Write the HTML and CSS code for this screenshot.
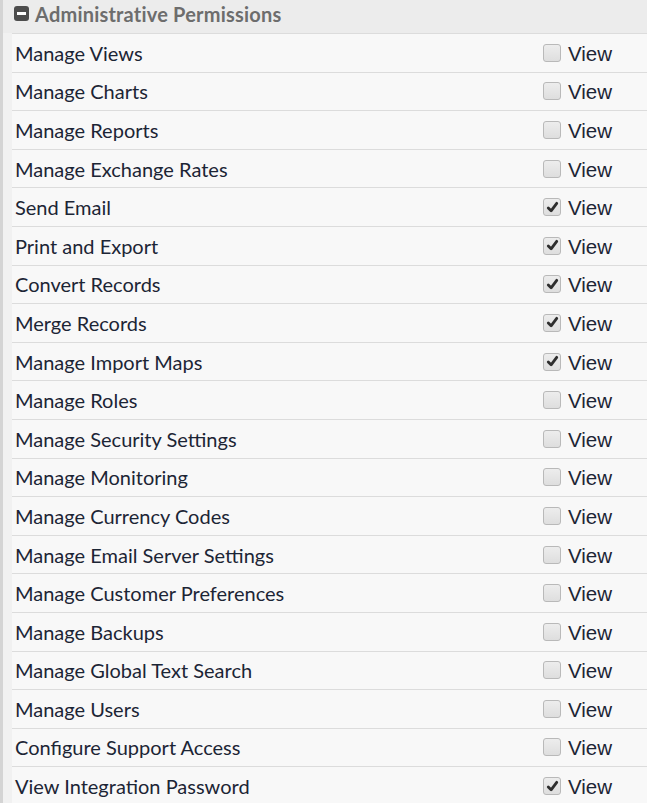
FILE: index.html
```html
<!DOCTYPE html>
<html>
<head>
<meta charset="utf-8">
<link rel="stylesheet" href="styles.css">
</head>
<body>
<div class="panel">
  <div class="header">
    <span class="toggle"><span class="minus"></span></span>
    <span class="title">Administrative Permissions</span>
  </div>
  <div class="rows">
    <div class="row"><span class="name">Manage Views</span><span class="perm"><span class="box"></span><span class="lbl">View</span></span></div>
    <div class="row"><span class="name">Manage Charts</span><span class="perm"><span class="box"></span><span class="lbl">View</span></span></div>
    <div class="row"><span class="name">Manage Reports</span><span class="perm"><span class="box"></span><span class="lbl">View</span></span></div>
    <div class="row"><span class="name">Manage Exchange Rates</span><span class="perm"><span class="box"></span><span class="lbl">View</span></span></div>
    <div class="row"><span class="name">Send Email</span><span class="perm"><span class="box checked"><svg viewBox="0 0 16 16"><path d="M3.5 8.5 L6.5 11.5 L12.5 3.5" /></svg></span><span class="lbl">View</span></span></div>
    <div class="row"><span class="name">Print and Export</span><span class="perm"><span class="box checked"><svg viewBox="0 0 16 16"><path d="M3.5 8.5 L6.5 11.5 L12.5 3.5" /></svg></span><span class="lbl">View</span></span></div>
    <div class="row"><span class="name">Convert Records</span><span class="perm"><span class="box checked"><svg viewBox="0 0 16 16"><path d="M3.5 8.5 L6.5 11.5 L12.5 3.5" /></svg></span><span class="lbl">View</span></span></div>
    <div class="row"><span class="name">Merge Records</span><span class="perm"><span class="box checked"><svg viewBox="0 0 16 16"><path d="M3.5 8.5 L6.5 11.5 L12.5 3.5" /></svg></span><span class="lbl">View</span></span></div>
    <div class="row"><span class="name">Manage Import Maps</span><span class="perm"><span class="box checked"><svg viewBox="0 0 16 16"><path d="M3.5 8.5 L6.5 11.5 L12.5 3.5" /></svg></span><span class="lbl">View</span></span></div>
    <div class="row"><span class="name">Manage Roles</span><span class="perm"><span class="box"></span><span class="lbl">View</span></span></div>
    <div class="row"><span class="name">Manage Security Settings</span><span class="perm"><span class="box"></span><span class="lbl">View</span></span></div>
    <div class="row"><span class="name">Manage Monitoring</span><span class="perm"><span class="box"></span><span class="lbl">View</span></span></div>
    <div class="row"><span class="name">Manage Currency Codes</span><span class="perm"><span class="box"></span><span class="lbl">View</span></span></div>
    <div class="row"><span class="name">Manage Email Server Settings</span><span class="perm"><span class="box"></span><span class="lbl">View</span></span></div>
    <div class="row"><span class="name">Manage Customer Preferences</span><span class="perm"><span class="box"></span><span class="lbl">View</span></span></div>
    <div class="row"><span class="name">Manage Backups</span><span class="perm"><span class="box"></span><span class="lbl">View</span></span></div>
    <div class="row"><span class="name">Manage Global Text Search</span><span class="perm"><span class="box"></span><span class="lbl">View</span></span></div>
    <div class="row"><span class="name">Manage Users</span><span class="perm"><span class="box"></span><span class="lbl">View</span></span></div>
    <div class="row"><span class="name">Configure Support Access</span><span class="perm"><span class="box"></span><span class="lbl">View</span></span></div>
    <div class="row"><span class="name">View Integration Password</span><span class="perm"><span class="box checked"><svg viewBox="0 0 16 16"><path d="M3.5 8.5 L6.5 11.5 L12.5 3.5" /></svg></span><span class="lbl">View</span></span></div>
  </div>
</div>
</body>
</html>
```

FILE: styles.css
```css
html, body {
  margin: 0;
  padding: 0;
  background: #f7f7f7;
}
body {
  width: 647px;
  height: 803px;
  overflow: hidden;
}
.panel {
  border-left: 3px solid #d4d4d4;
  background: #f1f1f1;
  height: 803px;
  box-sizing: border-box;
}
.header {
  height: 33px;
  background: #ececec;
  display: flex;
  align-items: center;
  padding-left: 11px;
  padding-bottom: 6px;
  box-sizing: border-box;
}
.toggle {
  width: 15px;
  height: 15px;
  border-radius: 3px;
  background: #4d4d4d;
  display: flex;
  align-items: center;
  justify-content: center;
  margin-right: 6px;
}
.minus {
  width: 9px;
  height: 3px;
  background: #ffffff;
}
.title {
  font-family: Lato, "Liberation Sans", sans-serif;
  font-weight: bold;
  font-size: 20px;
  letter-spacing: 0.2px;
  color: #6d6d6d;
}
.rows {
  margin-left: 9px;
  background: #f8f8f8;
}
.row {
  height: 38.6px;
  border-top: 1px solid #dcdcdc;
  box-sizing: border-box;
  display: flex;
  align-items: center;
  padding-left: 3px;
}
.name {
  flex: 1;
  font-family: Lato, "Liberation Sans", sans-serif;
  font-size: 20px;
  color: #1c2535;
}
.perm {
  width: 104px;
  display: flex;
  align-items: center;
}
.box {
  width: 18px;
  height: 18px;
  box-sizing: border-box;
  border: 1px solid #b9b9b9;
  border-radius: 3px;
  background: linear-gradient(#ededed, #dedede);
  margin-right: 7px;
  display: flex;
  align-items: center;
  justify-content: center;
}
.box svg {
  width: 15px;
  height: 15px;
}
.box path {
  fill: none;
  stroke: #2e2e2e;
  stroke-width: 3;
  stroke-linecap: round;
  stroke-linejoin: round;
}
.lbl {
  font-family: "Liberation Sans", Arial, sans-serif;
  font-size: 20.5px;
  color: #1c2535;
  padding-top: 2px;
}
```
